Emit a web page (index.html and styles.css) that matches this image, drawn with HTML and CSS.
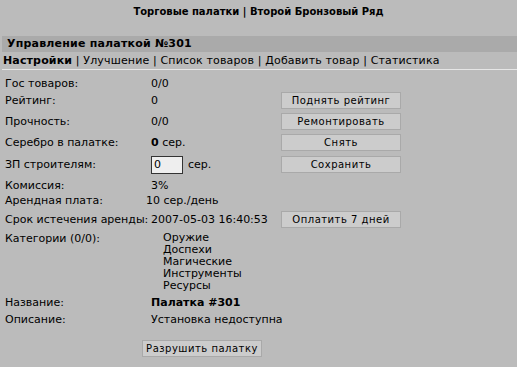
FILE: index.html
```html
<!DOCTYPE html>
<html>
<head>
<meta charset="utf-8">
<link rel="stylesheet" href="styles.css">
</head>
<body>
<div class="top">Торговые палатки | Второй Бронзовый Ряд</div>
<div class="panel">
  <div class="title">Управление палаткой №301</div>
  <div class="tabs"><b>Настройки</b> | Улучшение | Список товаров | Добавить товар | Статистика</div>
  <div class="grid">
    <div class="lbl r1">Гос товаров:</div><div class="val r1">0/0</div><div class="act r1"></div>
    <div class="lbl r2">Рейтинг:</div><div class="val r2">0</div><div class="act r2"><button class="btn">Поднять рейтинг</button></div>
    <div class="lbl r3">Прочность:</div><div class="val r3">0/0</div><div class="act r3"><button class="btn">Ремонтировать</button></div>
    <div class="lbl r4">Серебро в палатке:</div><div class="val r4"><b>0</b>&nbsp;сер.</div><div class="act r4"><button class="btn">Снять</button></div>
    <div class="lbl r5">ЗП строителям:</div><div class="val r5"><input class="inp" type="text" value="0"><span class="unit">сер.</span></div><div class="act r5"><button class="btn">Сохранить</button></div>
    <div class="lbl r6">Комиссия:</div><div class="val r6">3%</div><div class="act r6"></div>
    <div class="lbl r7">Арендная плата:</div><div class="val r7 shift">10 сер./день</div><div class="act r7"></div>
    <div class="lbl r8">Срок истечения аренды:</div><div class="val r8">2007-05-03 16:40:53</div><div class="act r8"><button class="btn">Оплатить 7 дней</button></div>
    <div class="lbl r9 top-al">Категории (0/0):</div>
    <div class="val r9 top-al">
      <ul class="cats">
        <li>Оружие</li>
        <li>Доспехи</li>
        <li>Магические</li>
        <li>Инструменты</li>
        <li>Ресурсы</li>
      </ul>
    </div>
    <div class="act r9"></div>
    <div class="lbl r10">Название:</div><div class="val r10"><b>Палатка #301</b></div><div class="act r10"></div>
    <div class="lbl r11">Описание:</div><div class="val r11">Установка недоступна</div><div class="act r11"></div>
  </div>
  <div class="footer"><button class="btn wide">Разрушить палатку</button></div>
</div>
</body>
</html>
```
FILE: styles.css
```css
html, body {
  margin: 0;
  padding: 0;
  background: #bbbbbb;
  color: #000;
  font-family: "DejaVu Sans", Verdana, sans-serif;
  font-size: 11px;
}
.top {
  height: 36px;
  box-sizing: border-box;
  padding-top: 5px;
  text-align: center;
  font-weight: bold;
  font-size: 10px;
  line-height: 13px;
}
.panel {
  margin-left: 2px;
}
.title {
  height: 16px;
  background: #aaaaaa;
  font-weight: bold;
  font-size: 11px;
  letter-spacing: 0.2px;
  line-height: 16px;
  padding-left: 5px;
}
.tabs {
  height: 17px;
  line-height: 17px;
  padding-left: 1px;
  border-bottom: 1px solid #e6e6e6;
  font-size: 11px;
  letter-spacing: 0.15px;
}
.grid {
  display: grid;
  grid-template-columns: 146px 130px 120px;
  grid-template-rows: 17px 17px 25px 17px 27px 15px 14px 25px 60px 20px 14px;
  padding-left: 3px;
  padding-top: 5px;
}
.grid > div {
  display: flex;
  align-items: center;
  white-space: nowrap;
}
.grid > .top-al {
  align-items: flex-start;
}
.shift {
  margin-left: -5px;
}
.cats {
  list-style: none;
  margin: 0;
  padding: 0 0 0 12px;
  line-height: 12px;
}
.btn {
  width: 120px;
  height: 17px;
  margin: 0;
  padding: 0;
  background: #cccccc;
  border: 1px solid #a9a9a9;
  font-family: "DejaVu Sans", Verdana, sans-serif;
  font-size: 10px;
  letter-spacing: 0.5px;
  color: #000;
}
.inp {
  width: 32px;
  height: 18px;
  box-sizing: border-box;
  margin: 0;
  padding: 0 0 0 2px;
  border: 1px solid #333333;
  background: #eeeeee;
  font-family: "DejaVu Sans", Verdana, sans-serif;
  font-size: 11px;
}
.unit {
  margin-left: 5px;
}
.footer {
  padding: 14px 0 0 140px;
}
.wide {
  width: 120px;
}
```
